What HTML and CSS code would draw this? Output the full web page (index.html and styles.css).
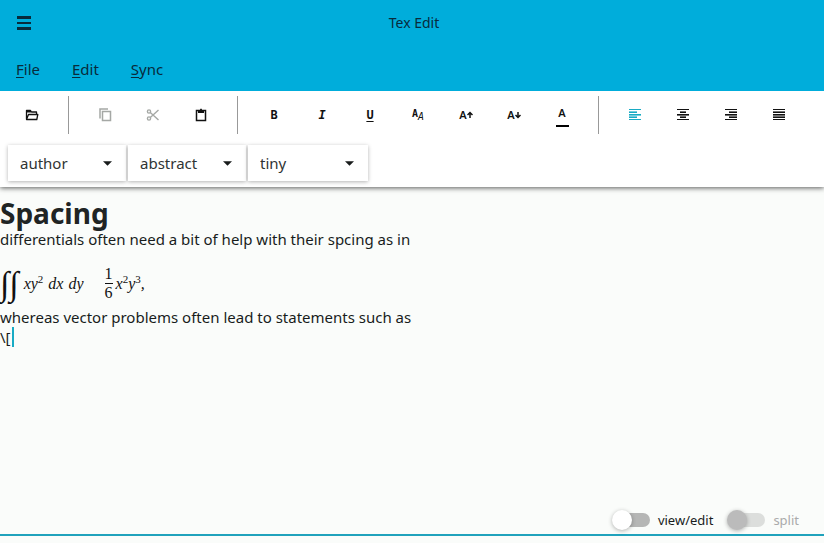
FILE: index.html
```
<!DOCTYPE html>
<html lang="en">
<head>
<meta charset="utf-8">
<title>Tex Edit</title>
<link rel="stylesheet" href="styles.css">
</head>
<body>
<header class="header">
  <div class="titlebar">
    <button class="menu-button" aria-label="Menu"><svg width="14" height="14"><path d="M0 0h14v3H0zM0 6h14v2H0zM0 11h14v3H0z"/></svg></button>
    <h1 class="title">Tex Edit</h1>
  </div>
  <nav class="menu">
    <a href="#"><span class="key">F</span>ile</a>
    <a href="#"><span class="key">E</span>dit</a>
    <a href="#"><span class="key">S</span>ync</a>
  </nav>
</header>
<div class="toolbar">
  <div class="tools">
    <button class="tool" aria-label="Open"><svg viewBox="0 0 16 16"><path d="M2.500 12V3.500h4l1 1.500h5v2M2.500 12.500 4.500 7.500h9.300l-1 5z" fill="none" stroke="currentColor" stroke-width="1.300" stroke-linejoin="round"/><path d="M2 3h5v2.500H2z"/></svg></button>
    <span class="separator"></span>
    <button class="tool" aria-label="Copy" disabled><svg viewBox="0 0 16 16"><path d="M5.500 4.500h8v9h-8zM3 11.500V2h8" fill="none" stroke="currentColor" stroke-width="1.500"/></svg></button>
    <button class="tool" aria-label="Cut" disabled><svg viewBox="0 0 16 16"><g fill="none" stroke="currentColor" stroke-width="1.400"><circle cx="4" cy="4.500" r="1.600"/><circle cx="4" cy="11.500" r="1.600"/><path d="M5.300 5.500 13.500 13M5.300 10.500 13.500 3"/></g></svg></button>
    <button class="tool" aria-label="Paste"><svg viewBox="0 0 16 16"><path d="M3.500 3.500h9v10h-9z" fill="none" stroke="currentColor" stroke-width="1.500"/><path d="M5 3h2a1 1.500 0 0 1 2 0h2v3H5z"/></svg></button>
    <span class="separator"></span>
    <button class="tool letter" aria-label="Bold">B</button>
    <button class="tool letter italic" aria-label="Italic">I</button>
    <button class="tool letter underline" aria-label="Underline">U</button>
    <button class="tool pair" aria-label="Font"><b>A</b><i>A</i></button>
    <button class="tool size" aria-label="Increase size">A<svg viewBox="0 0 6 8"><path d="M3 7V2M.5 4 3 1.500 5.500 4" fill="none" stroke="currentColor" stroke-width="1.500"/></svg></button>
    <button class="tool size" aria-label="Decrease size">A<svg viewBox="0 0 6 8"><path d="M3 1v5M.5 4 3 6.500 5.500 4" fill="none" stroke="currentColor" stroke-width="1.500"/></svg></button>
    <button class="tool color" aria-label="Text color"><span>A</span></button>
    <span class="separator"></span>
    <button class="tool active" aria-label="Align left"><svg viewBox="0 0 16 16"><path d="M2 2h12v1H2zM2 5h8v1H2zM2 7h12v1H2zM2 10h8v1H2zM2 12h12v1H2z"/><path opacity=".6" d="M2 4h8v1H2zM2 8h12v1H2zM2 9h8v1H2z"/></svg></button>
    <button class="tool" aria-label="Align center"><svg viewBox="0 0 16 16"><path d="M2 2h12v1H2zM5 5h6v1H5zM2 7h12v1H2zM5 10h6v1H5zM2 12h12v1H2z"/><path opacity=".6" d="M5 4h6v1H5zM2 8h12v1H2zM5 9h6v1H5z"/></svg></button>
    <button class="tool" aria-label="Align right"><svg viewBox="0 0 16 16"><path d="M2 2h12v1H2zM6 5h8v1H6zM2 7h12v1H2zM6 10h8v1H6zM2 12h12v1H2z"/><path opacity=".6" d="M6 4h8v1H6zM2 8h12v1H2zM6 9h8v1H6z"/></svg></button>
    <button class="tool" aria-label="Justify"><svg viewBox="0 0 16 16"><path d="M2 2h12v1H2zM2 5h12v1H2zM2 7h12v1H2zM2 10h12v1H2zM2 12h12v1H2z"/><path opacity=".6" d="M2 4h12v1H2zM2 8h12v2H2z"/></svg></button>
  </div>
  <div class="selects">
    <div class="picker"><select aria-label="Command"><option>author</option></select><svg viewBox="0 0 10 5"><path d="M0 0h10L5 5z"/></svg></div>
    <div class="picker"><select aria-label="Environment"><option>abstract</option></select><svg viewBox="0 0 10 5"><path d="M0 0h10L5 5z"/></svg></div>
    <div class="picker"><select aria-label="Font size"><option>tiny</option></select><svg viewBox="0 0 10 5"><path d="M0 0h10L5 5z"/></svg></div>
  </div>
</div>
<main class="editor">
  <h2>Spacing</h2>
  <p>differentials often need a bit of help with their spcing as in</p>
  <div class="formula">
    <span class="integral">∫∫</span>
    <span class="term">xy<sup>2</sup></span>
    <span class="term">dx</span>
    <span class="term">dy</span>
    <span class="fraction"><span>1</span><span>6</span></span>
    <span class="term">x<sup>2</sup>y<sup>3</sup>,</span>
  </div>
  <p>whereas vector problems often lead to statements such as</p>
  <p class="caret">\[</p>
</main>
<footer class="footer">
  <label class="switch"><input type="checkbox">view/edit</label>
  <label class="switch"><input type="checkbox" disabled>split</label>
</footer>
</body>
</html>
```
FILE: styles.css
```
* { box-sizing: border-box; }
body {
  margin: 0;
  min-height: 100vh;
  display: flex;
  flex-direction: column;
  border-bottom: 7px solid #fafcfa;
  background: #fafcfa;
  color: #181c1c;
  font: 15px/20px "Noto Sans", sans-serif;
}
button { border: 0; padding: 0; background: none; color: inherit; font: inherit; }
svg { display: block; fill: currentColor; }
h1, h2, p { margin: 0; }
.header { position: relative; z-index: 1; background: #00addb; color: #082b3c; }
.titlebar {
  display: grid;
  grid-template-columns: 48px 1fr 44px;
  align-items: center;
  height: 46px;
}
.menu-button { display: grid; place-items: center; height: 46px; }
.title { font-size: 14px; font-weight: 400; text-align: center; }
.menu { display: flex; align-items: center; gap: 32px; height: 45px; padding: 0 16px; }
.menu a { color: inherit; text-decoration: none; }
.key { text-decoration: underline; text-underline-offset: 2px; }
.toolbar {
  position: relative;
  padding: 0 8px 6px;
  background: #fff;
  box-shadow: 0 1px 5px rgba(0, 0, 0, .65);
}
.tools { display: flex; align-items: center; height: 48px; }
.tool {
  display: flex;
  align-items: center;
  justify-content: center;
  width: 48px;
  height: 48px;
  color: #111;
  line-height: 16px;
}
.tool svg { width: 16px; height: 16px; }
.tool:disabled { color: #a5a8a5; }
.tool.active { color: #18abc4; }
.separator { width: 1px; height: 38px; margin: 0 12px; background: #999; }
.letter { font: bold 12px/16px "DejaVu Sans Mono", monospace; }
.italic { font-style: italic; }
.underline { text-decoration: underline; text-underline-offset: 2px; }
.pair { font: 10px/12px "DejaVu Sans Mono", monospace; }
.pair b { padding-bottom: 2px; }
.pair i { padding-top: 4px; }
.size, .color { font-size: 11px; font-weight: 600; }
.tool.size svg { width: 6px; height: 8px; }
.color span { width: 13px; padding-bottom: 4px; border-bottom: 2px solid #000; }
.color { padding-top: 2px; }
.selects { display: flex; gap: 2px; padding-top: 6px; }
.picker {
  position: relative;
  width: 118px;
  height: 36px;
  background: #fff;
  box-shadow: 0 1px 4px rgba(0, 0, 0, .3);
}
.picker:last-child { width: 120px; }
.picker select {
  appearance: none;
  width: 100%;
  height: 100%;
  padding: 0 24px 0 12px;
  border: 0;
  background: none;
  color: #303434;
  font: inherit;
}
.picker svg { position: absolute; right: 14px; top: 16px; width: 9px; height: 5px; pointer-events: none; }
.editor { flex: 1; padding-top: 10px; }
.editor h2 { font-size: 28px; line-height: 32px; color: #202424; }
.formula {
  display: flex;
  align-items: center;
  height: 58px;
  padding-top: 11px;
  color: #111;
  font: 16px/18px "Liberation Serif", serif;
}
.integral { margin-right: 5px; font: italic 34px/36px "Liberation Serif", serif; }
.term { margin-right: 5px; font-style: italic; }
.term sup { font: 11px/0 "Liberation Serif", serif; }
.fraction { display: grid; margin: 0 3px 0 16px; text-align: center; }
.fraction span + span { border-top: 1px solid #111; }
.caret { width: fit-content; padding-right: 1px; border-right: 2px solid #18abc4; }
.footer {
  display: flex;
  justify-content: flex-end;
  gap: 16px;
  padding: 0 25px 4px;
  border-bottom: 2px solid #20a2bc;
  font-size: 13px;
}
.switch { display: flex; align-items: center; gap: 8px; }
.switch input {
  appearance: none;
  position: relative;
  width: 36px;
  height: 14px;
  margin: 0;
  border-radius: 7px;
  background: #b5b6b5;
}
.switch input::before {
  content: "";
  position: absolute;
  left: -2px;
  top: -3px;
  width: 20px;
  height: 20px;
  border-radius: 50%;
  background: #fff;
  box-shadow: 0 1px 4px rgba(0, 0, 0, .3);
}
.switch:has(:disabled) { color: #aaa; }
.switch input:disabled { background: #dcdedc; }
.switch input:disabled::before { background: #bbb; }
```
